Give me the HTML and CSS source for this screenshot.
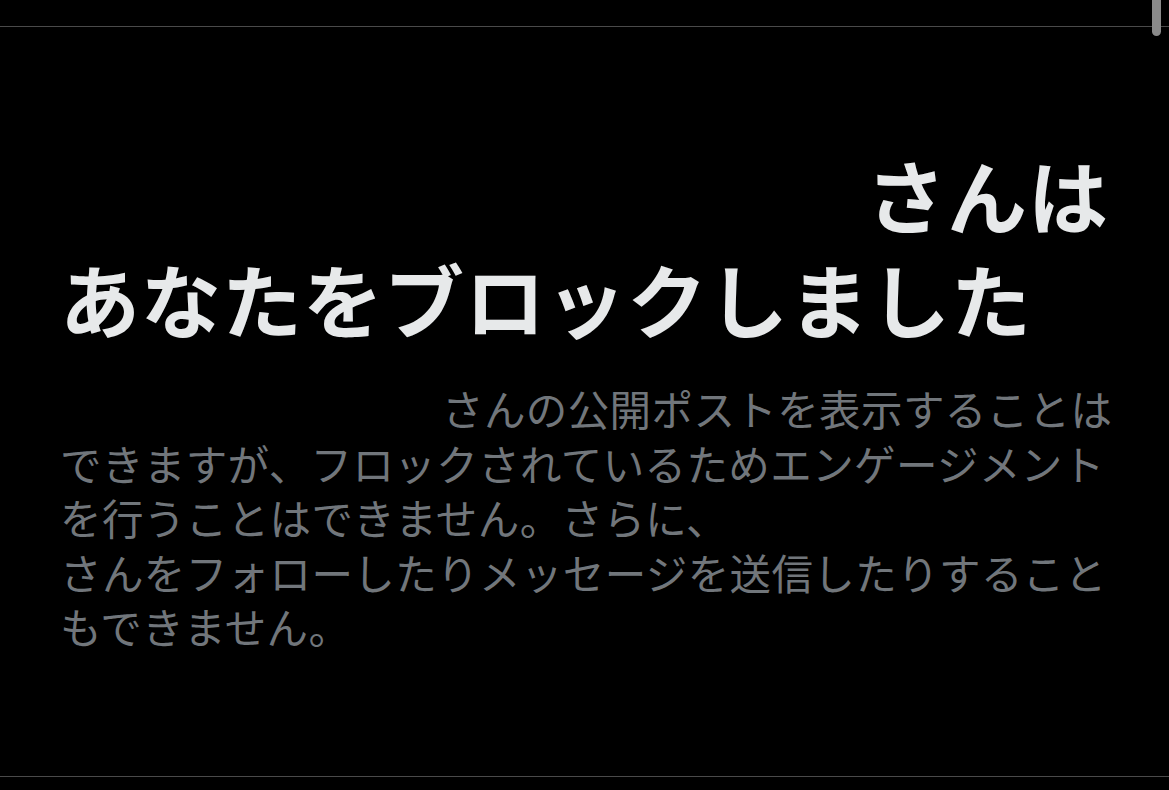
FILE: index.html
```html
<!DOCTYPE html>
<html lang="ja">
<head>
  <meta charset="UTF-8">
  <title>ブロックされています</title>
  <link rel="stylesheet" href="styles.css">
</head>
<body>
  <div class="page">
    <div class="topbar">
      <div class="scroll-thumb"></div>
    </div>

    <main class="blocked">
      <h2 class="blocked-title"><span class="hidden-name name-title"></span>さんは あなたをブロックしました</h2>
      <p class="blocked-text"><span class="hidden-name name-text"></span>さんの公開ポストを表示することはできますが、フロックされているためエンゲージメントを行うことはできません。さらに、<span class="hidden-name name-text"></span>さんをフォローしたりメッセージを送信したりすることもできません。</p>
    </main>

    <div class="bottombar"></div>
  </div>
</body>
</html>
```

FILE: styles.css
```css
body {
  margin: 0;
  background-color: #000;
  font-family: "Noto Sans CJK JP", "Noto Sans", sans-serif;
  overflow: hidden;
}
.page {
  height: 790px;
  display: flex;
  flex-direction: column;
}
.topbar {
  position: relative;
  height: 26px;
  flex-shrink: 0;
  border-bottom: 1px solid #4a4a4a;
}
.scroll-thumb {
  position: absolute;
  top: 0;
  right: 8px;
  width: 9px;
  height: 36px;
  background: #8a8a8a;
  border-radius: 0 0 5px 5px;
  z-index: 2;
}
.blocked {
  flex: 1;
  padding: 114px 50px 0 60px;
  border-bottom: 1px solid #4a4a4a;
}
.blocked-title {
  margin: 0;
  font-size: 80px;
  line-height: 104px;
  letter-spacing: 1px;
  font-weight: 700;
  color: #e7e9ea;
  word-break: break-all;
}
.blocked-text {
  margin: 32px 0 0;
  font-size: 41.5px;
  line-height: 54.5px;
  letter-spacing: 0.4px;
  font-weight: 400;
  color: #71767b;
}
/* blacked-out user name */
.hidden-name {
  display: inline-block;
  height: 1px;
}
.name-title {
  width: 806px;
}
.name-text {
  width: 382px;
}
.bottombar {
  height: 13px;
  flex-shrink: 0;
}
```
